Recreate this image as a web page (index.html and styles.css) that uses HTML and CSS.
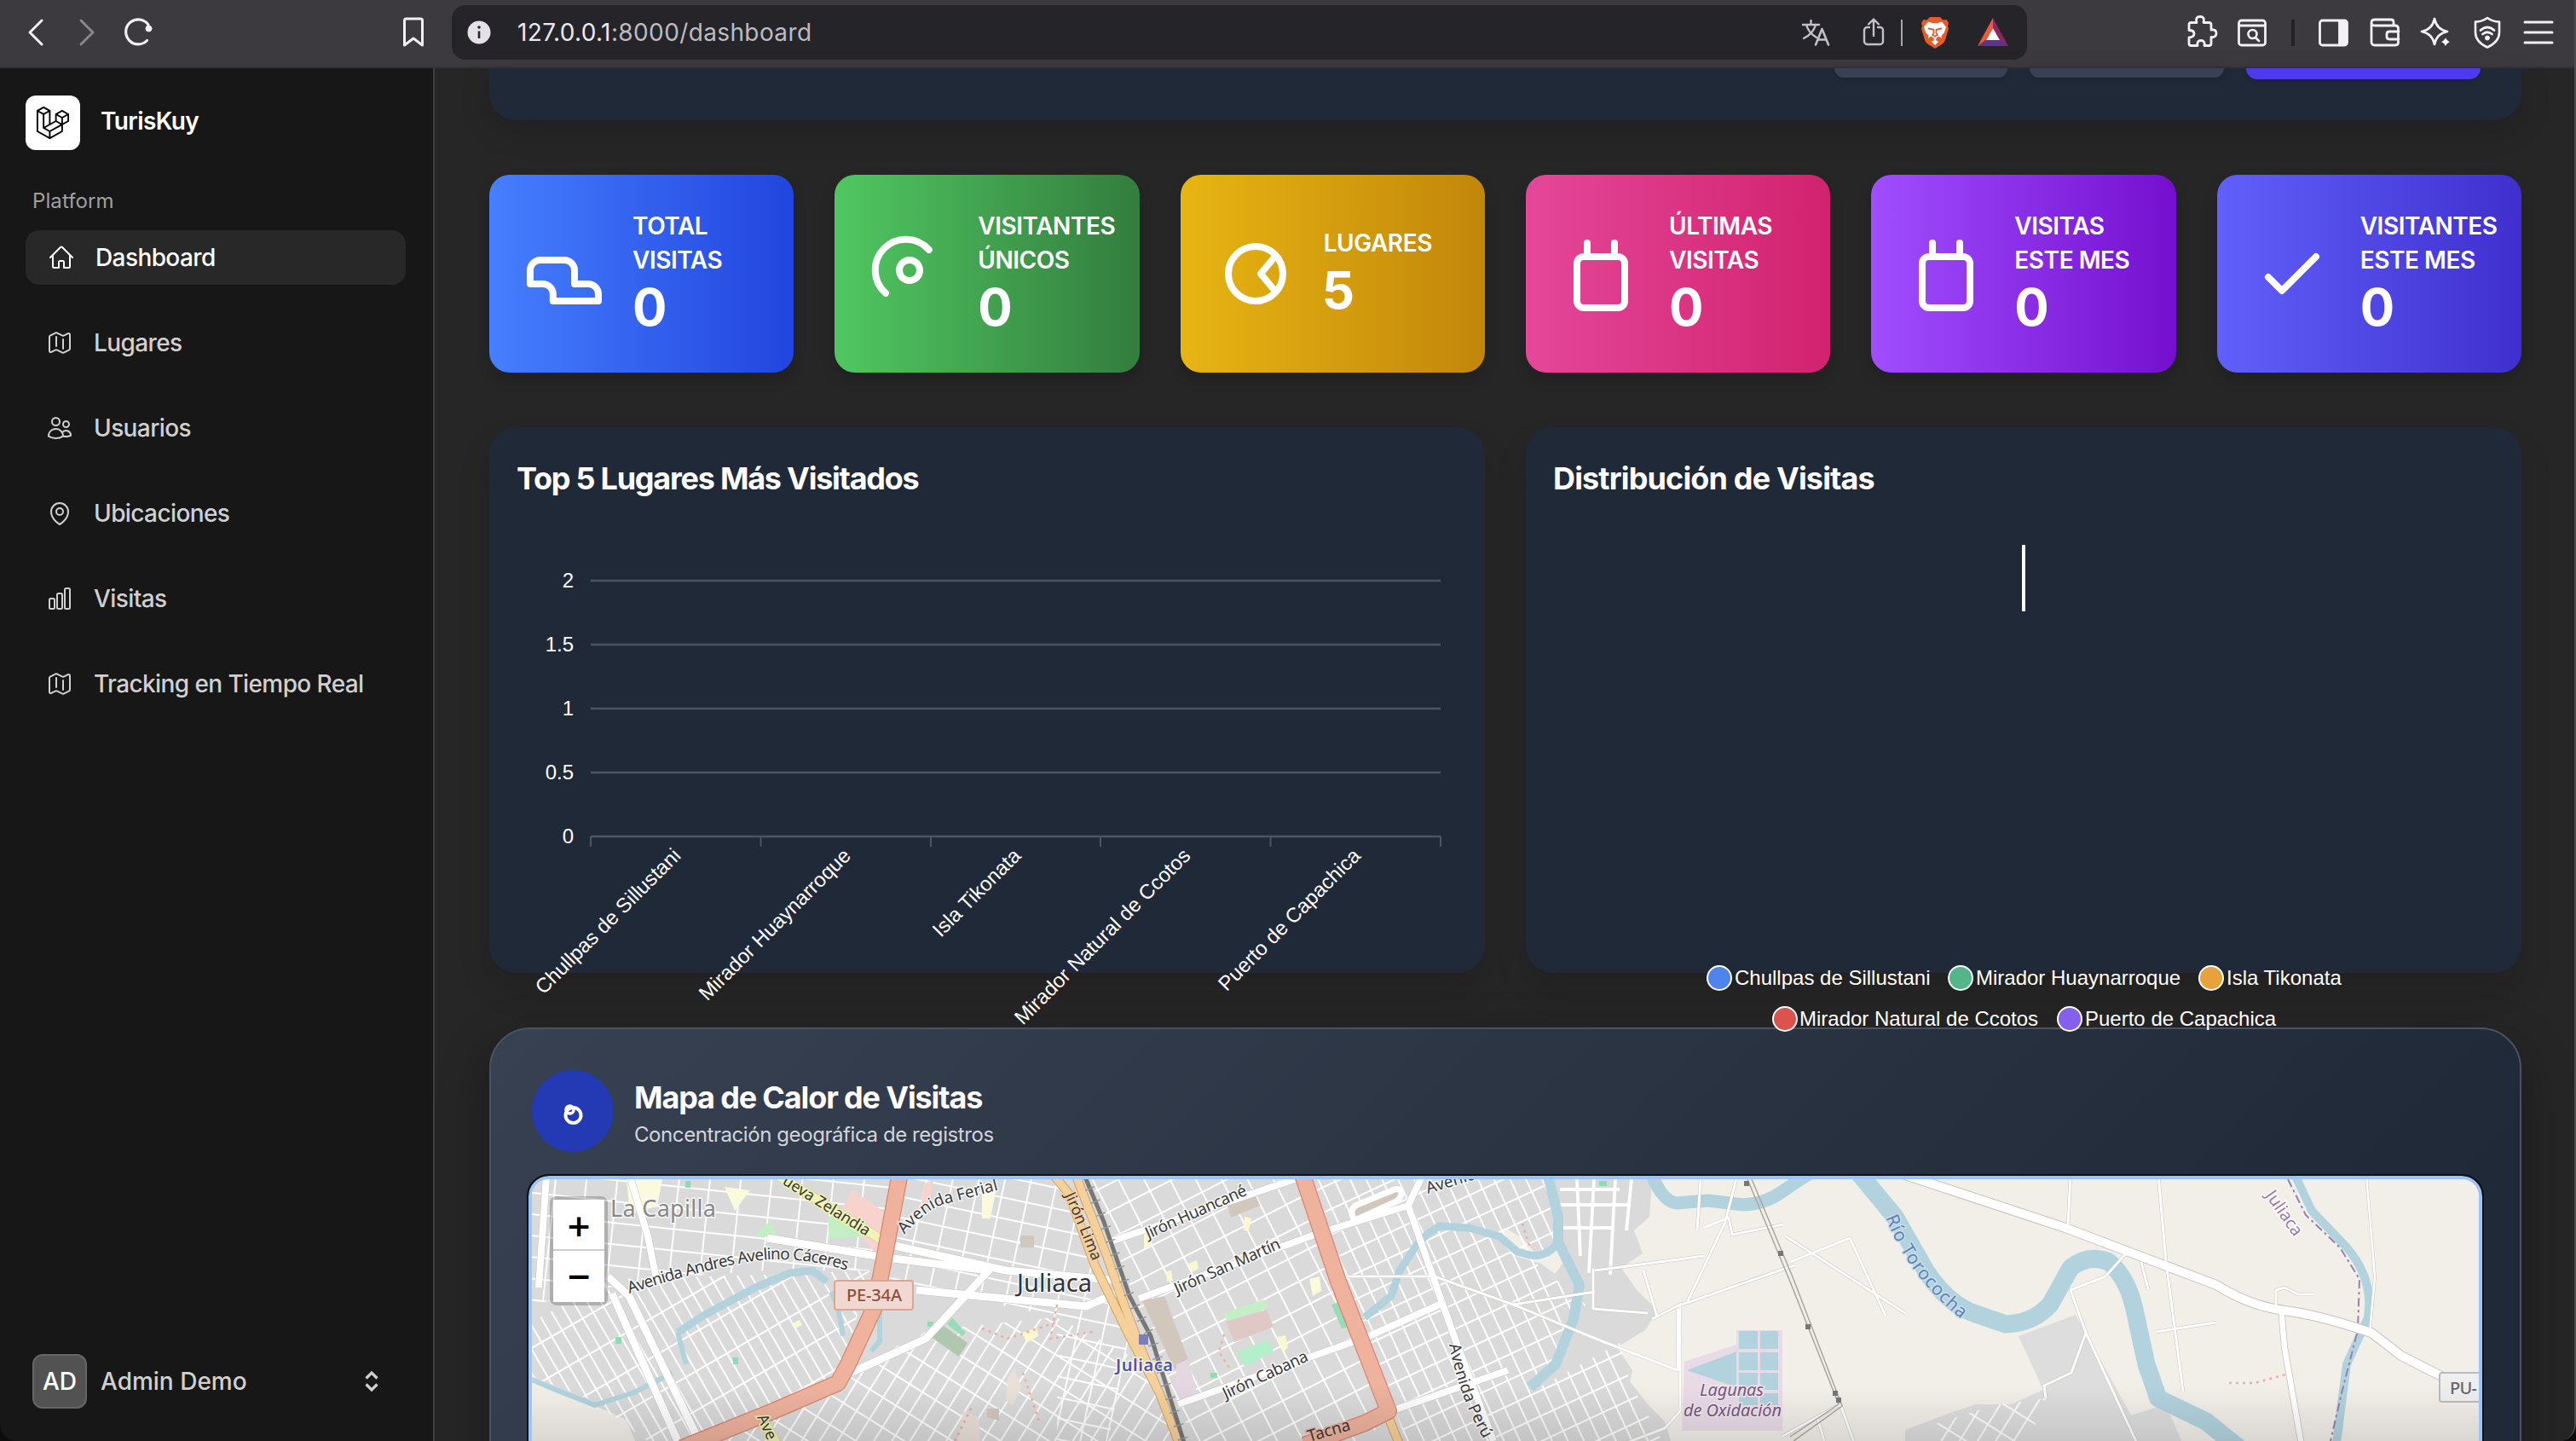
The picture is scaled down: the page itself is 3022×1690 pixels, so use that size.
FILE: index.html
```html
<!DOCTYPE html>
<html lang="es">
<head>
<meta charset="utf-8">
<title>TurisKuy</title>
<link rel="stylesheet" href="styles.css">
</head>
<body>
<div class="window">
<header class="toolbar">
  <div class="nav-tools">
    <svg class="ti" viewBox="0 0 40 40"><path d="M27 6 13 20 27 34" stroke-width="3"/></svg>
    <svg class="ti dim" viewBox="0 0 40 40"><path d="M13 6 27 20 13 34" stroke-width="3"/></svg>
    <svg class="ti" viewBox="0 0 40 40"><path d="M30.500 29.500A14.500 14.500 0 1 1 32 11" stroke-width="3.200"/><circle cx="32.500" cy="15.500" r="3.500" fill="currentColor"/></svg>
    <svg class="ti bookmark" viewBox="0 0 40 40"><path d="M9.500 6a2 2 0 0 1 2-2h17a2 2 0 0 1 2 2v29L20 27 9.500 35z" stroke-width="3"/></svg>
  </div>
  <div class="address">
    <svg class="info" viewBox="0 0 28 28"><circle cx="14" cy="14" r="13.500" fill="#e4e2e8"/><path d="M14 12.500v8.500" stroke="#26252a" stroke-width="2.600"/><circle cx="14" cy="8" r="1.800" fill="#26252a"/></svg>
    <span class="url"><b>127.0.0.1</b>:8000/dashboard</span>
    <svg class="ti soft translate" viewBox="0 0 40 40"><path d="M5 11h19M14.500 6v5M20 11c-2 8-8 13-14 16M9 11c2 7 7 12 12 15" stroke-width="2.400"/><path d="M20 34.500 27.500 16 35 34.500M22.500 28.500h10" stroke-width="2.600"/></svg>
    <svg class="ti soft share" viewBox="0 0 40 40"><path d="M20 24V5M14 10.500 20 4.500l6 6M15 14h-2.500A3.500 3.500 0 0 0 9 17.500v13a3.500 3.500 0 0 0 3.500 3.500h15a3.500 3.500 0 0 0 3.500-3.500v-13a3.500 3.500 0 0 0-3.500-3.500H25" stroke-width="2.400"/></svg>
    <i class="sep"></i>
    <svg class="ti brave" viewBox="0 0 40 40"><path d="M14 2h12l3.500 3.500 4-.5L36 9l-1 3.500 1 3L32 29q-1 3-4 5l-8 5-8-5q-3-2-4-5L4 15.500l1-3L4 9l2.500-4 4 .5z" fill="#e8592b"/><path d="M12 7.500 17 9h6l5-1.500 5 6-2 6.500-3.500 4 .5 3-3.500-2.500-3 2 0 1.500L20 30l-1.500-2 0-1.500-3-2L12 27l.5-3L9 20 7 13.500zM16 31l4-2.500 4 2.500-4 4z" fill="#fff"/><path d="M12.500 15.500l5 1M27.500 15.500l-5 1M18.500 17v4l-1.500 2 3 1.500 3-1.500-1.500-2v-4" stroke="#e8592b" stroke-width="1.800"/></svg>
    <svg class="ti tri" viewBox="0 0 40 40"><path d="M20 3 2 36l9-6 9-15z" fill="#f15a35"/><path d="M20 3 38 36l-9-6-9-15z" fill="#932462"/><path d="M2 36h36l-9-7H11z" fill="#5f3292"/><path d="M20 15 28 29H12z" fill="#fff"/></svg>
  </div>
  <div class="ext-tools">
    <svg class="ti" viewBox="0 0 40 40"><path d="M6 11q0-2.500 2.500-2.500H15q-2-7 4-7t4 7h6.500q2.500 0 2.500 2.500v6q6-1 6 4t-6 4.500V33q0 2.500-2.500 2.500H24q1-6-4-6t-4 6H8.500Q6 35.500 6 33v-7q6-.5 6-4.500t-6-4z" stroke-width="2.800"/></svg>
    <svg class="ti" viewBox="0 0 40 40"><rect x="4.500" y="6" width="31" height="29" rx="3" stroke-width="2.800"/><path d="M5 12h30M24 26l4 4" stroke-width="2.800"/><circle cx="20.500" cy="22" r="5" stroke-width="2.600"/></svg>
    <i class="sep dark"></i>
    <svg class="ti" viewBox="0 0 40 40"><rect x="3.500" y="6" width="32" height="29" rx="3" stroke-width="2.800"/><path d="M26 6h9v29h-9z" fill="currentColor"/></svg>
    <svg class="ti" viewBox="0 0 40 40"><path d="M30 12V8q0-3-3-3H8Q4 5 4 9v22q0 4 4 4h24q3.500 0 3.500-3.500v-16Q35.500 12 32 12H8q-4 0-4-3.500M36 19H25q-3 0-3 3v3q0 3 3 3h11" stroke-width="2.800"/></svg>
    <svg class="ti" viewBox="0 0 40 40"><path d="M18 4q2.500 12.500 15 15-12.500 2.500-15 15-2.500-12.500-15-15 12.500-2.500 15-15z" stroke-width="2.800"/><path d="M31 25q1.500 5 6 6-4.500 1.500-6 6-1.500-4.500-6-6 4.500-1 6-6z" fill="#fff" stroke="#3c3a3f" stroke-width="1"/></svg>
    <svg class="ti" viewBox="0 0 40 40"><path d="M20 3q6 4.500 14 4.500V20q0 11-14 17.500Q6 31 6 20V7.500Q14 7.500 20 3z" stroke-width="2.600"/><path d="M12 17.500q8-7 16 0M14.500 22q5.500-4.500 11 0" stroke-width="2.800"/><circle cx="20" cy="26.500" r="2.500" fill="currentColor"/></svg>
    <svg class="ti" viewBox="0 0 40 40"><path d="M4 8h32M4 20h32M4 32h32" stroke-width="3"/></svg>
  </div>
</header>

<div class="app">
<aside class="sidebar">
  <div class="brand">
    <span class="brand-mark"><svg viewBox="0 0 40 42"><path fill="#000" fill-rule="evenodd" clip-rule="evenodd" d="M17.2 5.633 8.600.855 0 5.633v26.510l16.200 9 16.200-9v-8.442l7.600-4.223V9.856l-8.600-4.777-8.600 4.777V18.300l-5.600 3.111V5.633ZM38 18.301l-5.600 3.110v-6.157l5.600-3.110V18.300Zm-1.060-7.856-5.540 3.078-5.540-3.079 5.540-3.078 5.540 3.079ZM24.800 18.300v-6.157l5.600 3.111v6.158L24.800 18.300Zm-1 1.732 5.540 3.078-13.140 7.302-5.540-3.078 13.140-7.300v-.002Zm-16.200 7.890 7.600 4.222V38.300L2 30.966V7.920l5.600 3.111v16.892ZM8.600 9.300 3.060 6.222 8.600 3.143l5.540 3.080L8.600 9.300Zm21.800 15.510-13.200 7.334V38.300l13.200-7.334v-6.156ZM9.600 11.034l5.600-3.110v14.600l-5.600 3.110v-14.600Z"/></svg></span>
    <span class="brand-name">TurisKuy</span>
  </div>
  <div class="group-label">Platform</div>
  <nav class="menu">
    <a class="item active"><svg class="hi" viewBox="0 0 24 24"><path d="m2.250 12 8.954-8.955c.440-.439 1.152-.439 1.591 0L21.750 12M4.500 9.750v10.125c0 .621.504 1.125 1.125 1.125H9.750v-4.875c0-.621.504-1.125 1.125-1.125h2.250c.621 0 1.125.504 1.125 1.125V21h4.125c.621 0 1.125-.504 1.125-1.125V9.750"/></svg>Dashboard</a>
    <a class="item"><svg class="hi" viewBox="0 0 24 24"><path d="M9 6.750V15m6-6v8.250m.503 3.498 4.875-2.437c.381-.190.622-.580.622-1.006V4.820c0-.836-.880-1.380-1.628-1.006l-3.869 1.934c-.317.159-.690.159-1.006 0L9.503 3.252a1.125 1.125 0 0 0-1.006 0L3.622 5.689C3.240 5.880 3 6.270 3 6.695V19.180c0 .836.880 1.380 1.628 1.006l3.869-1.934c.317-.159.690-.159 1.006 0l4.994 2.497c.317.158.690.158 1.006 0Z"/></svg>Lugares</a>
    <a class="item"><svg class="hi" viewBox="0 0 24 24"><path d="M15 19.128a9.380 9.380 0 0 0 2.625.372 9.337 9.337 0 0 0 4.121-.952 4.125 4.125 0 0 0-7.533-2.493M15 19.128v-.003c0-1.113-.285-2.160-.786-3.070M15 19.128v.106A12.318 12.318 0 0 1 8.624 21c-2.331 0-4.512-.645-6.374-1.766l-.001-.109a6.375 6.375 0 0 1 11.964-3.070M12 6.375a3.375 3.375 0 1 1-6.750 0 3.375 3.375 0 0 1 6.750 0Zm8.250 2.250a2.625 2.625 0 1 1-5.250 0 2.625 2.625 0 0 1 5.250 0Z"/></svg>Usuarios</a>
    <a class="item"><svg class="hi" viewBox="0 0 24 24"><path d="M15 10.500a3 3 0 1 1-6 0 3 3 0 0 1 6 0Z"/><path d="M19.500 10.500c0 7.142-7.500 11.250-7.500 11.250S4.500 17.642 4.500 10.500a7.500 7.500 0 1 1 15 0Z"/></svg>Ubicaciones</a>
    <a class="item"><svg class="hi" viewBox="0 0 24 24"><path d="M3 13.125C3 12.504 3.504 12 4.125 12h2.250c.621 0 1.125.504 1.125 1.125v6.750C7.500 20.496 6.996 21 6.375 21h-2.250A1.125 1.125 0 0 1 3 19.875v-6.750ZM9.750 8.625c0-.621.504-1.125 1.125-1.125h2.250c.621 0 1.125.504 1.125 1.125v11.250c0 .621-.504 1.125-1.125 1.125h-2.250a1.125 1.125 0 0 1-1.125-1.125V8.625ZM16.500 4.125c0-.621.504-1.125 1.125-1.125h2.250C20.496 3 21 3.504 21 4.125v15.750c0 .621-.504 1.125-1.125 1.125h-2.250a1.125 1.125 0 0 1-1.125-1.125V4.125Z"/></svg>Visitas</a>
    <a class="item"><svg class="hi" viewBox="0 0 24 24"><path d="M9 6.750V15m6-6v8.250m.503 3.498 4.875-2.437c.381-.190.622-.580.622-1.006V4.820c0-.836-.880-1.380-1.628-1.006l-3.869 1.934c-.317.159-.690.159-1.006 0L9.503 3.252a1.125 1.125 0 0 0-1.006 0L3.622 5.689C3.240 5.880 3 6.270 3 6.695V19.180c0 .836.880 1.380 1.628 1.006l3.869-1.934c.317-.159.690-.159 1.006 0l4.994 2.497c.317.158.690.158 1.006 0Z"/></svg>Tracking en Tiempo Real</a>
  </nav>
  <div class="profile">
    <span class="avatar">AD</span>
    <span class="name">Admin Demo</span>
    <svg class="updown" viewBox="0 0 16 24"><path d="M1.500 8.500 8 2l6.500 6.500M1.500 15.500 8 22l6.500-6.500"/></svg>
  </div>
</aside>

<main class="content">
  <section class="hero"><span class="btn b1"></span><span class="btn b2"></span><span class="btn b3"></span></section>

  <section class="stats">
    <article class="stat blue"><svg viewBox="0 0 24 24"><path d="M2 15v-4a3 3 0 0 1 3-3h7a3 3 0 0 1 3 3v4h4a3 3 0 0 1 3 3v2H8.700v-2a3 3 0 0 0-3-3z"/></svg><div><h3>TOTAL VISITAS</h3><p>0</p></div></article>
    <article class="stat green"><svg viewBox="0 0 24 24"><path d="M17.700 5A9 9 0 1 0 5 17.700"/><circle cx="12" cy="11" r="3"/></svg><div><h3>VISITANTES ÚNICOS</h3><p>0</p></div></article>
    <article class="stat yellow"><svg viewBox="0 0 24 24"><circle cx="12" cy="12" r="8"/><path d="M17.500 7.200 13.500 12l4 4.800"/></svg><div><h3>LUGARES</h3><p class="five">5</p></div></article>
    <article class="stat pink"><svg viewBox="0 0 24 24"><path d="M8 7V3m8 4V3M7 7h10a2 2 0 0 1 2 2v11a2 2 0 0 1-2 2H7a2 2 0 0 1-2-2V9a2 2 0 0 1 2-2z"/></svg><div><h3>ÚLTIMAS VISITAS</h3><p>0</p></div></article>
    <article class="stat purple"><svg viewBox="0 0 24 24"><path d="M8 7V3m8 4V3M7 7h10a2 2 0 0 1 2 2v11a2 2 0 0 1-2 2H7a2 2 0 0 1-2-2V9a2 2 0 0 1 2-2z"/></svg><div><h3>VISITAS ESTE MES</h3><p>0</p></div></article>
    <article class="stat indigo"><svg viewBox="0 0 24 24"><path d="m5 13 4 4L19 7"/></svg><div><h3>VISITANTES ESTE MES</h3><p>0</p></div></article>
  </section>

  <section class="charts">
    <article class="panel">
      <h2 class="t1">Top 5 Lugares Más Visitados</h2>
      <svg class="chart" viewBox="606 605 1104 504">
        <path class="axis" d="M693 681h997M693 756h997M693 831h997M693 906h997M693 981h997"/>
        <path class="tick" d="M693 981v12M892.500 981v12M1092 981v12M1291 981v12M1490.500 981v12M1690 981v12"/>
        <g text-anchor="end"><text x="673" y="689">2</text><text x="673" y="764">1.5</text><text x="673" y="839">1</text><text x="673" y="914">0.5</text><text x="673" y="989">0</text>
        <text transform="translate(800 1005) rotate(-45)">Chullpas de Sillustani</text>
        <text transform="translate(999.500 1005) rotate(-45)">Mirador Huaynarroque</text>
        <text transform="translate(1199 1005) rotate(-45)">Isla Tikonata</text>
        <text transform="translate(1398 1005) rotate(-45)">Mirador Natural de Ccotos</text>
        <text transform="translate(1597.500 1005) rotate(-45)">Puerto de Capachica</text></g>
      </svg>
    </article>
    <article class="panel">
      <h2 class="t2">Distribución de Visitas</h2>
      <svg class="chart" viewBox="1822 605 1104 504">
        <path d="M2374 639v78" stroke="#fff" stroke-width="4"/>
        <g stroke="#fff" stroke-width="2"><circle cx="2017" cy="1147" r="14" fill="#4f83ee"/><circle cx="2300" cy="1147" r="14" fill="#53b688"/><circle cx="2594" cy="1147" r="14" fill="#e8a23b"/><circle cx="2094" cy="1195" r="14" fill="#dd524c"/><circle cx="2428" cy="1195" r="14" fill="#8560ec"/></g>
        <text x="2035" y="1155">Chullpas de Sillustani</text><text x="2318" y="1155">Mirador Huaynarroque</text><text x="2612" y="1155">Isla Tikonata</text><text x="2111" y="1203">Mirador Natural de Ccotos</text><text x="2446" y="1203">Puerto de Capachica</text>
      </svg>
    </article>
  </section>

  <section class="heat">
    <div class="heat-head">
      <span class="heat-icon"><svg viewBox="0 0 96 96"><circle cx="48.500" cy="53" r="9" stroke-width="4"/><circle cx="44.500" cy="46.500" r="4.500" stroke-width="3.500"/></svg></span>
      <div><h2>Mapa de Calor de Visitas</h2><p>Concentración geográfica de registros</p></div>
    </div>
    <div class="map">
      <svg class="tiles" viewBox="624 1383 2284 307" preserveAspectRatio="none">
        <defs>
          <pattern id="ga" width="36" height="25" patternUnits="userSpaceOnUse" patternTransform="rotate(6)"><path class="st" d="M0 0H36M0 0V25"/></pattern>
          <pattern id="gb" width="14" height="40" patternUnits="userSpaceOnUse" patternTransform="rotate(-30)"><path class="st" d="M0 0H14M0 0V40"/></pattern>
          <pattern id="gc" width="30" height="24" patternUnits="userSpaceOnUse" patternTransform="rotate(12)"><path class="st" d="M0 0H30M0 0V24"/></pattern>
          <pattern id="gd" width="27" height="29" patternUnits="userSpaceOnUse" patternTransform="rotate(-27)"><path class="st" d="M0 0H27M0 0V29"/></pattern>
          <pattern id="ge" width="17" height="27" patternUnits="userSpaceOnUse" patternTransform="rotate(-25)"><path class="st" d="M0 0H17M0 0V27"/></pattern>
          <pattern id="gf" width="18" height="30" patternUnits="userSpaceOnUse" patternTransform="rotate(32)"><path class="st" d="M0 0H18M0 0V30"/></pattern>
          <linearGradient id="fade" x2="0" y2="1"><stop offset="0" stop-color="#000" stop-opacity="0"/><stop offset="1" stop-color="#000" stop-opacity=".1"/></linearGradient>
        </defs>
        <path fill="#f2efe9" d="M624 1383h2284v307H624z"/>
        <path fill="#dadada" d="M624 1383H1938L1935 1427 1917 1443 1927 1470 1902 1487 1920 1513 1945 1537 1930 1560 1897 1580 1915 1607 1912 1620 1933 1647 1953 1667 1960 1690H745L735 1665 690 1645 650 1630 624 1620z"/>
        <path fill="#f2efe9" d="M1754 1447l12-7 20 12 14 16 20-4 8-12 10 24-14 18-16-12-34-10z"/>
        <path fill="#dddddd" d="M2368 1567 2435 1542 2500 1660 2541 1647 2559 1690H2235V1677L2288 1657 2318 1647H2359L2397 1630z"/>
        <path fill="url(#ga)" d="M624 1383H1050L1030 1490 900 1490 760 1500 624 1530z"/>
        <path fill="url(#gb)" d="M624 1550 720 1500 900 1495 1020 1490 985 1620 815 1690H760L690 1640 624 1615z"/>
        <path fill="url(#gc)" d="M1052 1383H1240L1325 1567 1300 1690H1240V1545L1080 1510 1035 1500z"/>
        <path fill="url(#gf)" d="M990 1610 1090 1560 1240 1545 1345 1600 1390 1690H830z"/>
        <path fill="url(#gd)" d="M1280 1383H1528L1630 1660 1600 1690H1400L1330 1520z"/>
        <path fill="url(#ge)" d="M1535 1383H1815L1835 1470 1800 1480 1860 1530 1800 1630 1900 1575 1912 1620 1950 1690H1650z"/>
        <path fill="url(#gf)" d="M2270 1670 2340 1648 2400 1640 2380 1690H2262z"/>
        <path class="st" d="M1830 1395h70M1828 1413h85M1832 1440h60M1850 1383l4 90M1870 1383l-6 110M1895 1383l-6 112M1914 1383l-6 60"/>

        <path fill="#f8d3cd" d="M1000 1396l36 24-6 54-24-30-22-20zM1085 1388l10-4-4 26-12 10z"/>
        <path fill="#fbfade" d="M735 1383h42l-6 32-32 8zM850 1392l30 4-18 24zM1152 1395l18-6-8 40h-10zM1536 1500l12-3 2 17-10 6z"/>
        <path fill="#c4efc5" d="M885 1450l18-18 10 18zM972 1452v-26l50 24zM1435 1540l48-16 5 10-48 16z"/>
        <path fill="#afc7af" d="M1107 1555l28 20-10 16-32-22z"/>
        <path fill="#96dcb8" d="M1117 1545l16 18-4 4-18-14zM1562 1530l12-4 10 30-10 2z"/>
        <path fill="#b3efc8" d="M1452 1585l36-14 6 14-34 18z"/>
        <path fill="#dfc8c6" d="M1438 1550l48-14 8 20-46 18z"/>
        <path fill="#d2c7bd" d="M1340 1526l26-6 30 80-18 6zM1440 1414l32-14 6 14-34 14zM1197 1449h16v14h-16zM1158 1652h14v14l-14-4z"/>
        <path fill="#e9e1d8" d="M1190 1605l8 22-10 22-8-6 2-26zM1130 1655l18 8 2 27h-26z"/>
        <path fill="#e3d7e2" d="M1380 1600l14-6 12 48-20 8-6-20z"/>
        <path fill="#faf8cf" d="M1342 1446h8v16l-8 2zM1394 1482l10-4 2 10-8 4zM1498 1568l10-2 3 14-6 6zM1460 1427l8 2-3 14h-6zM1368 1491l6-1 2 12-7 1zM1200 1563l16-6 2 10-14 8zM930 1552l8-4 3 6-8 4z"/>
        <path fill="#8fdbb5" d="M860 1592h6v8h-6zM722 1568h7v8h-7zM804 1385h6v8h-6zM1088 1550h7v6h-7zM1420 1610h8v6h-8zM1876 1385h9v6h-9z"/>

        <g class="river">
          <path stroke-width="12" d="M1815 1375 1828 1427V1457L1853 1507 1846 1547 1825 1600 1795 1627"/>
          <path stroke-width="9" d="M1828 1457Q1815 1475 1795 1472L1780 1468 1759 1450 1723 1440 1688 1438 1675 1447 1662 1460 1642 1490 1632 1520 1601 1545"/>
          <path stroke-width="15" d="M1938 1378Q1950 1408 1966 1411L2004 1408 2045 1413Q2070 1412 2090 1398T2130 1372"/>
          <path stroke-width="21" d="M2180 1375 2223 1427 2259 1490Q2285 1530 2318 1541L2353 1553Q2385 1552 2405 1530L2429 1487Q2450 1470 2474 1480 2498 1500 2506 1545L2518 1600 2532 1640 2588 1667 2629 1700"/>
          <path stroke-width="10" d="M2691 1375 2712 1420 2753 1463Q2785 1500 2778 1545L2753 1600 2740 1700"/>
          <path stroke-width="9" d="M970 1503 953 1490 927 1493 886 1510 825 1543 795 1563"/>
          <path stroke-width="6" d="M795 1563 805 1600M975 1515 983 1533 989 1567M1032 1535v38l-10 12M789 1610 744 1633 698 1648 652 1630 624 1618"/>
        </g>
        <path fill="none" stroke="#9b7fae" stroke-width="2" stroke-dasharray="10 4 3 4" d="M2684 1383 2705 1425 2745 1463 2768 1500 2766 1560 2748 1630 2734 1690"/>
        <path fill="#e8dbe6" d="M2037 1577V1560H2091V1678H1973L1976 1597z"/>
        <path fill="#b2d2de" d="M2040 1561h22v21h-22zM2065 1561h21v21h-21zM2040 1586h22v21h-22zM2065 1586h21v21h-21zM2040 1610h22v20h-22zM2065 1610h21v20h-21zM2040 1634h22v14h-22zM2065 1634h21v14h-21zM1979 1607l58-22v42z"/>

        <g class="rc"><path stroke-width="10" d="M1045 1460 1180 1490 1315 1502M1075 1513 1274 1532 1312 1516M1040 1475 1160 1490 1086 1570 994 1612M713 1497 738 1520 820 1690M718 1517 795 1690M900 1452 1040 1475"/>
          <path stroke-width="9" d="M1300 1457 1519 1383M1336 1523 1545 1447 1652 1414 1668 1380M1382 1647 1606 1567 1693 1528M1652 1414 1688 1517 1708 1573 1752 1690M1637 1653 1769 1607"/>
          <path stroke-width="4" d="M1570 1497H1683L1775 1530 1877 1572 1968 1607V1535M1971 1530V1655L1953 1675 1900 1695M1971 1530 1979 1528 2024 1433 2038 1378M1979 1528 2105 1484M1871 1490 1999 1473M1869 1488V1535L1933 1540M1938 1547 1971 1530M1775 1530 1871 1515M1928 1490l16 54M2429 1378 2426 1437M2532 1378 2541 1480 2561 1632M2494 1470 2470 1497 2429 1513 2447 1563 2508 1695M2447 1563 2430 1610 2398 1625 2400 1640M2529 1562 2600 1551M2512 1480l8 32M2670 1533v-20l10-3 16 8h18M2100 1480 2170 1452 2212 1543M2095 1450 2235 1540M2159 1647 2090 1685M2159 1647l16 45M2132 1662l8 28M1998 1440l30-12 4 20 60-12M1995 1383l-4 60"/>
          <path stroke-width="3.500" d="M2776 1378 2786 1497 2780 1563"/>
          <path stroke-width="8" d="M2676 1533 2680 1580 2700 1695"/>
          <path stroke-width="12" d="M2235 1378 2423 1440 2600 1507Q2640 1532 2680 1537T2782 1563L2817 1590 2864 1614"/>
          <path stroke-width="9" d="M641 1380 632 1510M740 1383 760 1450 770 1500"/>
        </g>
        <g class="rw"><path stroke-width="9" d="M1045 1460 1180 1490 1315 1502M1075 1513 1274 1532 1312 1516M1040 1475 1160 1490 1086 1570 994 1612M713 1497 738 1520 820 1690M718 1517 795 1690M900 1452 1040 1475"/>
          <path stroke-width="8" d="M1300 1457 1519 1383M1336 1523 1545 1447 1652 1414 1668 1380M1382 1647 1606 1567 1693 1528M1652 1414 1688 1517 1708 1573 1752 1690M1637 1653 1769 1607"/>
          <path stroke-width="3" d="M1570 1497H1683L1775 1530 1877 1572 1968 1607V1535M1971 1530V1655L1953 1675 1900 1695M1971 1530 1979 1528 2024 1433 2038 1378M1979 1528 2105 1484M1871 1490 1999 1473M1869 1488V1535L1933 1540M1938 1547 1971 1530M1775 1530 1871 1515M1928 1490l16 54M2429 1378 2426 1437M2532 1378 2541 1480 2561 1632M2494 1470 2470 1497 2429 1513 2447 1563 2508 1695M2447 1563 2430 1610 2398 1625 2400 1640M2529 1562 2600 1551M2512 1480l8 32M2670 1533v-20l10-3 16 8h18M2100 1480 2170 1452 2212 1543M2095 1450 2235 1540M2159 1647 2090 1685M2159 1647l16 45M2132 1662l8 28M1998 1440l30-12 4 20 60-12M1995 1383l-4 60"/>
          <path stroke-width="2.500" d="M2776 1378 2786 1497 2780 1563"/>
          <path stroke-width="6.500" d="M2676 1533 2680 1580 2700 1695"/>
          <path stroke-width="10" d="M2235 1378 2423 1440 2600 1507Q2640 1532 2680 1537T2782 1563L2817 1590 2864 1614"/>
          <path stroke-width="8" d="M641 1380 632 1510M740 1383 760 1450 770 1500"/>
        </g>
        <path fill="#d2c7bd" stroke="#fff" stroke-width="7" stroke-linejoin="round" d="M1586 1422q0-6 6-9l44-18q8-2 8 6-2 6-8 9l-44 20q-6 0-6-8z"/>
        <path fill="none" stroke="#aaa6a0" stroke-width="1.500" d="M2050 1383 2100 1503 2157 1647 2100 1685M2055 1383 2104 1500 2161 1649 2104 1690"/>
        <path fill="#777" d="M2046 1385h6v6h-6zM2086 1467h6v6h-6zM2118 1553h6v6h-6zM2150 1631h6v6h-6zM2154 1639h6v6h-6z"/>
        <path fill="none" stroke="#f0aca0" stroke-width="2.500" stroke-dasharray="3 5" d="M2615 1622h30l36-10M1152 1558l30 12 60-20M1240 1530l-8 40 50-8M1120 1690l20-40M1200 1610l20 60M1786 1435l8 26M1436 1565l-6 20 14 22"/>

        <g fill="none" stroke-linejoin="round">
          <path stroke="#d8d99c" stroke-width="12" d="M912 1378 968 1413 1036 1455M890 1655 912 1695"/><path stroke="#eff3b4" stroke-width="10" d="M912 1378 968 1413 1036 1455M890 1655 912 1695"/>
          <path stroke="#cda365" stroke-width="11" d="M1236 1378 1254 1400 1284 1483 1325 1567 1360 1633 1384 1695M1262 1378 1300 1477 1315 1520 1335 1573 1358 1630M1628 1660l14 35"/>
          <path stroke="#f6d09a" stroke-width="9" d="M1236 1378 1254 1400 1284 1483 1325 1567 1360 1633 1384 1695M1262 1378 1300 1477 1315 1520 1335 1573 1358 1630M1628 1660l14 35"/>
          <path stroke="#777" stroke-width="5" d="M1272 1378 1295 1433 1325 1520 1350 1567 1376 1650 1390 1695"/>
          <path stroke="#999" stroke-width="12" stroke-dasharray="1.500 15" d="M1272 1378 1295 1433 1325 1520 1350 1567 1376 1650 1390 1695"/>
          <path stroke="#d98570" stroke-width="20" d="M1056 1375 1037 1477 1026 1533 994 1602 983 1622 907 1655 800 1698M1527 1375 1570 1503 1629 1655 1601 1669 1530 1695"/>
          <path stroke="#eeb29d" stroke-width="17.500" d="M1056 1375 1037 1477 1026 1533 994 1602 983 1622 907 1655 800 1698M1527 1375 1570 1503 1629 1655 1601 1669 1530 1695"/>
        </g>
        <path fill="#7a80b5" d="M1336 1565h11v12h-11z"/>

        <g class="lb">
          <path id="p1" d="M738 1517Q860 1478 907 1477T1000 1492"/><path id="p2" d="M917 1388 968 1420 1018 1451"/><path id="p3" d="M1061 1448Q1085 1420 1105 1413L1170 1396"/><path id="p4" d="M1249 1402Q1262 1430 1284 1485"/><path id="p5" d="M1700 1577Q1712 1640 1742 1690"/><path id="p6" d="M2212 1428Q2240 1500 2305 1550"/>
          <text x="716" y="1427" font-size="27" fill="#888" textLength="124">La Capilla</text>
          <text x="1193" y="1515" font-size="29" fill="#333" textLength="88">Juliaca</text>
          <text font-size="19"><textPath href="#p1" textLength="262">Avenida Andres Avelino Cáceres</textPath></text>
          <text class="on-yellow" font-size="18"><textPath href="#p2">ueva Zelandia</textPath></text>
          <text font-size="19"><textPath href="#p3">Avenida Ferial</textPath></text>
          <text class="on-orange" font-size="18"><textPath href="#p4">Jirón Lima</textPath></text>
          <text font-size="19" transform="translate(1347 1453) rotate(-24)" textLength="128">Jirón Huancané</text>
          <text font-size="19" transform="translate(1381 1518) rotate(-24)" textLength="134">Jirón San Martín</text>
          <text font-size="19" transform="translate(1438 1641) rotate(-25)" textLength="108">Jirón Cabana</text>
          <text class="on-red" font-size="19" transform="translate(1536 1691) rotate(-16)">Tacna</text>
          <text font-size="19" transform="translate(1675 1400) rotate(-17)">Avenida</text>
          <text font-size="19"><textPath href="#p5">Avenida Perú</textPath></text>
          <text class="on-yellow" font-size="18" transform="translate(888 1662) rotate(66)">Ave</text>
          <text x="1309" y="1608" font-size="20" font-weight="600" fill="#4b57a8" textLength="67">Juliaca</text>
          <text class="on-water" font-size="21" fill="#5b83b8"><textPath href="#p6" textLength="150">Río Torococha</textPath></text>
          <text font-size="20" fill="#9b7b9f" transform="translate(2657 1402) rotate(55)">Juliaca</text>
          <g font-style="italic" font-size="20"><text x="1994" y="1637" fill="#79577f" textLength="75">Lagunas</text><text x="1975" y="1661" fill="#79577f" textLength="115">de Oxidación</text></g>
        </g>
        <rect x="979" y="1502" width="92" height="34" rx="3" fill="#f1d8d0" stroke="#dba795" stroke-width="2"/>
        <text class="sh" x="993" y="1526" fill="#8d5240" textLength="65">PE-34A</text>
        <rect x="2862" y="1610" width="70" height="34" rx="3" fill="#eee" stroke="#bbb" stroke-width="2"/>
        <text class="sh" x="2874" y="1635" fill="#666" textLength="32">PU-</text>
        <path fill="url(#fade)" d="M624 1625h2284v65H624z"/>
      </svg>
      <div class="zoom"><span class="in">+</span><span>−</span></div>
    </div>
  </section>
</main>
</div>
</div>
</body>
</html>
```
FILE: styles.css
```css
*{box-sizing:border-box;margin:0;padding:0}
body{background:#0c0c0c;font-family:Inter,"Liberation Sans",sans-serif;color:#fff}
.window{width:3022px;height:1690px;overflow:hidden;border-radius:0 0 20px 20px;border-right:2px solid #4c4c4e;background:#171717}
.toolbar{display:flex;align-items:center;height:80px;padding-bottom:2px;background:#3c3a3f;border-bottom:2px solid #333236}
.nav-tools{display:flex;gap:20px;width:530px;padding:0 25px 0 22px;flex:none}
.bookmark{margin-left:auto}
.ti{width:40px;height:40px;flex:none;fill:none;stroke:currentColor;stroke-linecap:round;stroke-linejoin:round;color:#f1f0f3}
.ti.dim{color:#88868b}
.ti.soft{color:#c3c1c7}
.ti.brave,.ti.tri{stroke:none}
.brave{margin-left:18px}
.tri{margin-left:28px}
.address{display:flex;align-items:center;width:1848px;height:64px;flex:none;padding:0 20px 0 18px;border-radius:16px;background:#252429}
.info{width:28px;height:28px}
.url{margin-left:31px;font-size:28px;letter-spacing:.38px;color:#bdbbc1}
.url b{font-weight:400;color:#ebe9ef}
.translate{margin-left:auto}
.share{margin-left:28px}
.sep{width:2px;height:31px;margin-left:12px;background:#a9a7ad}
.sep.dark{width:4px;margin:0 6px;background:#232227}
.ext-tools{display:flex;align-items:center;justify-content:flex-end;gap:20px;flex:1;padding-right:22px}

.app{display:flex;height:1610px}
.sidebar{display:flex;flex-direction:column;width:510px;flex:none;padding:32px 32px 38px 30px;border-right:2px solid #3f3f3f;background:#171717}
.brand{display:flex;align-items:center;gap:24px;height:64px;font-size:28px;font-weight:600;letter-spacing:-.6px}
.brand-name{padding-bottom:4px}
.brand-mark{display:grid;place-items:center;width:64px;height:64px;border-radius:12px;background:#fff}
.brand-mark svg{width:40px;height:40px}
.group-label{margin:40px 0 0 8px;height:40px;line-height:40px;font-size:24px;letter-spacing:.1px;color:#a0a0a0}
.menu{display:flex;flex-direction:column;gap:36px;margin-top:14px}
.item{display:flex;align-items:center;gap:24px;height:64px;padding-left:24px;border-radius:16px;font-size:28px;font-weight:500;letter-spacing:-.6px;color:#d0d0d0}
.item.active{padding-left:26px;background:#282828;color:#fff}
.hi{width:32px;height:32px;fill:none;stroke:currentColor;stroke-width:1.5;stroke-linecap:round;stroke-linejoin:round}
.profile{display:flex;align-items:center;margin:auto 0 0 8px;height:64px;font-size:28px;font-weight:500}
.avatar{display:grid;place-items:center;width:64px;height:64px;border:2px solid #666;border-radius:12px;background:#525252}
.name{margin-left:16px;color:#d0d0d0}
.updown{width:16px;height:24px;margin-left:auto;margin-right:32px;fill:none;stroke:#d0d0d0;stroke-width:3.2}

.content{display:flex;flex-direction:column;gap:64px;width:2510px;flex:none;padding:0 62px 0 64px;background:#262626}
.hero{display:flex;justify-content:flex-end;align-items:flex-start;height:61px;flex:none;padding-right:48px;gap:26px;border-radius:0 0 32px 32px;background:#202937;box-shadow:0 12px 36px rgba(0,0,0,.15)}
.btn{height:11px;border-radius:0 0 16px 16px;background:#384252;box-shadow:0 2px 6px rgba(0,0,0,.15)}
.b1{width:203px}
.b2{width:228px}
.b3{width:275px;height:13px;background:#4f39ee}

.stats{display:grid;grid-template-columns:repeat(6,1fr);gap:48px;height:232px;flex:none}
.stat{display:flex;align-items:center;gap:32px;padding:0 20px 0 40px;border-radius:24px;box-shadow:0 8px 16px rgba(0,0,0,.15)}
.stat svg{width:96px;height:96px;flex:none;overflow:visible;fill:none;stroke:#fff;stroke-width:2;stroke-linecap:round;stroke-linejoin:round}
.stat div{flex:1;min-width:0}
.stat h3{width:163px;font-size:28px;font-weight:600;line-height:40px;letter-spacing:-.45px}
.stat p{height:72px;font-size:60px;font-weight:700;line-height:70px}
.stat .five{text-indent:-2px}
.blue{background:linear-gradient(90deg,#467fff,#2145de)}
.green{background:linear-gradient(90deg,#50c761,#337d3e)}
.yellow{background:linear-gradient(90deg,#e7b513,#c2860a)}
.pink{background:linear-gradient(90deg,#e5479a,#d1226e)}
.purple{background:linear-gradient(90deg,#a04eff,#750fcf)}
.indigo{background:linear-gradient(90deg,#6160fb,#3f2fce)}

.charts{position:relative;z-index:1;display:grid;grid-template-columns:1fr 1fr;gap:48px;height:640px;flex:none}
.panel{height:640px;padding:32px;border-radius:32px;background:#202937;box-shadow:0 20px 40px -4px rgba(0,0,0,.15)}
.panel h2{height:72px;line-height:56px;font-size:36px;font-weight:700}
.panel .t1{letter-spacing:-1.25px}
.panel .t2{letter-spacing:-.85px}
.chart{display:block;width:1104px;height:504px;overflow:visible}
.chart text{font:24px "Liberation Sans",Arial,sans-serif;fill:#fff}
.axis{stroke:#4b5563;stroke-width:2.4}
.tick{stroke:#4b5563;stroke-width:2}

.heat{height:560px;flex:none;padding:48px 44px;border:2px solid #4a5363;border-radius:48px;background:linear-gradient(135deg,#374151,#202938 85%);box-shadow:0 20px 60px rgba(0,0,0,.3)}
.heat-head{display:flex;align-items:center;gap:24px;height:96px;margin-left:4px}
.heat-head div{height:96px;padding-top:8px}
.heat-icon{width:96px;height:96px;border-radius:50%;background:#233ab4}
.heat-icon svg{width:96px;height:96px;fill:none;stroke:#fff}
.heat-head h2{font-size:36px;font-weight:700;line-height:48px;letter-spacing:-1.15px}
.heat-head p{font-size:24px;line-height:40px;letter-spacing:-.42px;color:#d1d5dc}
.map{position:relative;height:500px;margin-top:28px;border:4px solid #9dc3fb;border-radius:24px;outline:2px solid #101010;overflow:hidden;background:#f2efe9}
.tiles{display:block;width:100%;height:307px}
.st{fill:none;stroke:#fff;stroke-width:3.8}
.river{fill:none;stroke:#b2d2de;stroke-linejoin:round}
.rc{fill:none;stroke:#c4c2bd;stroke-linejoin:round}
.rw{fill:none;stroke:#fff;stroke-linejoin:round}
.lb path{fill:none}
.lb text{font-family:"Noto Sans",sans-serif;paint-order:stroke;stroke:rgba(255,255,255,.75);stroke-width:3px}
.lb text:not([fill]){fill:#3a3a3a}
.lb g text{stroke:#f0e6ee}
.lb .on-yellow{stroke:#eff3b4}
.lb .on-orange{stroke:#f6d09a}
.lb .on-red{stroke:#eeb29d}
.lb .on-water{stroke:#c9dfe8}
.sh{font:500 20px "Noto Sans",sans-serif}
.zoom{position:absolute;top:20px;left:21px;display:flex;flex-direction:column;gap:2px;width:68px;border:4px solid rgba(0,0,0,.2);border-radius:8px;background:#ccc;background-clip:padding-box}
.zoom span{height:60px;line-height:60px;text-align:center;font-family:"DejaVu Sans",sans-serif;font-size:36px;font-weight:700;color:#000;background:#fff}
.zoom .in{height:58px;line-height:62px}
```
